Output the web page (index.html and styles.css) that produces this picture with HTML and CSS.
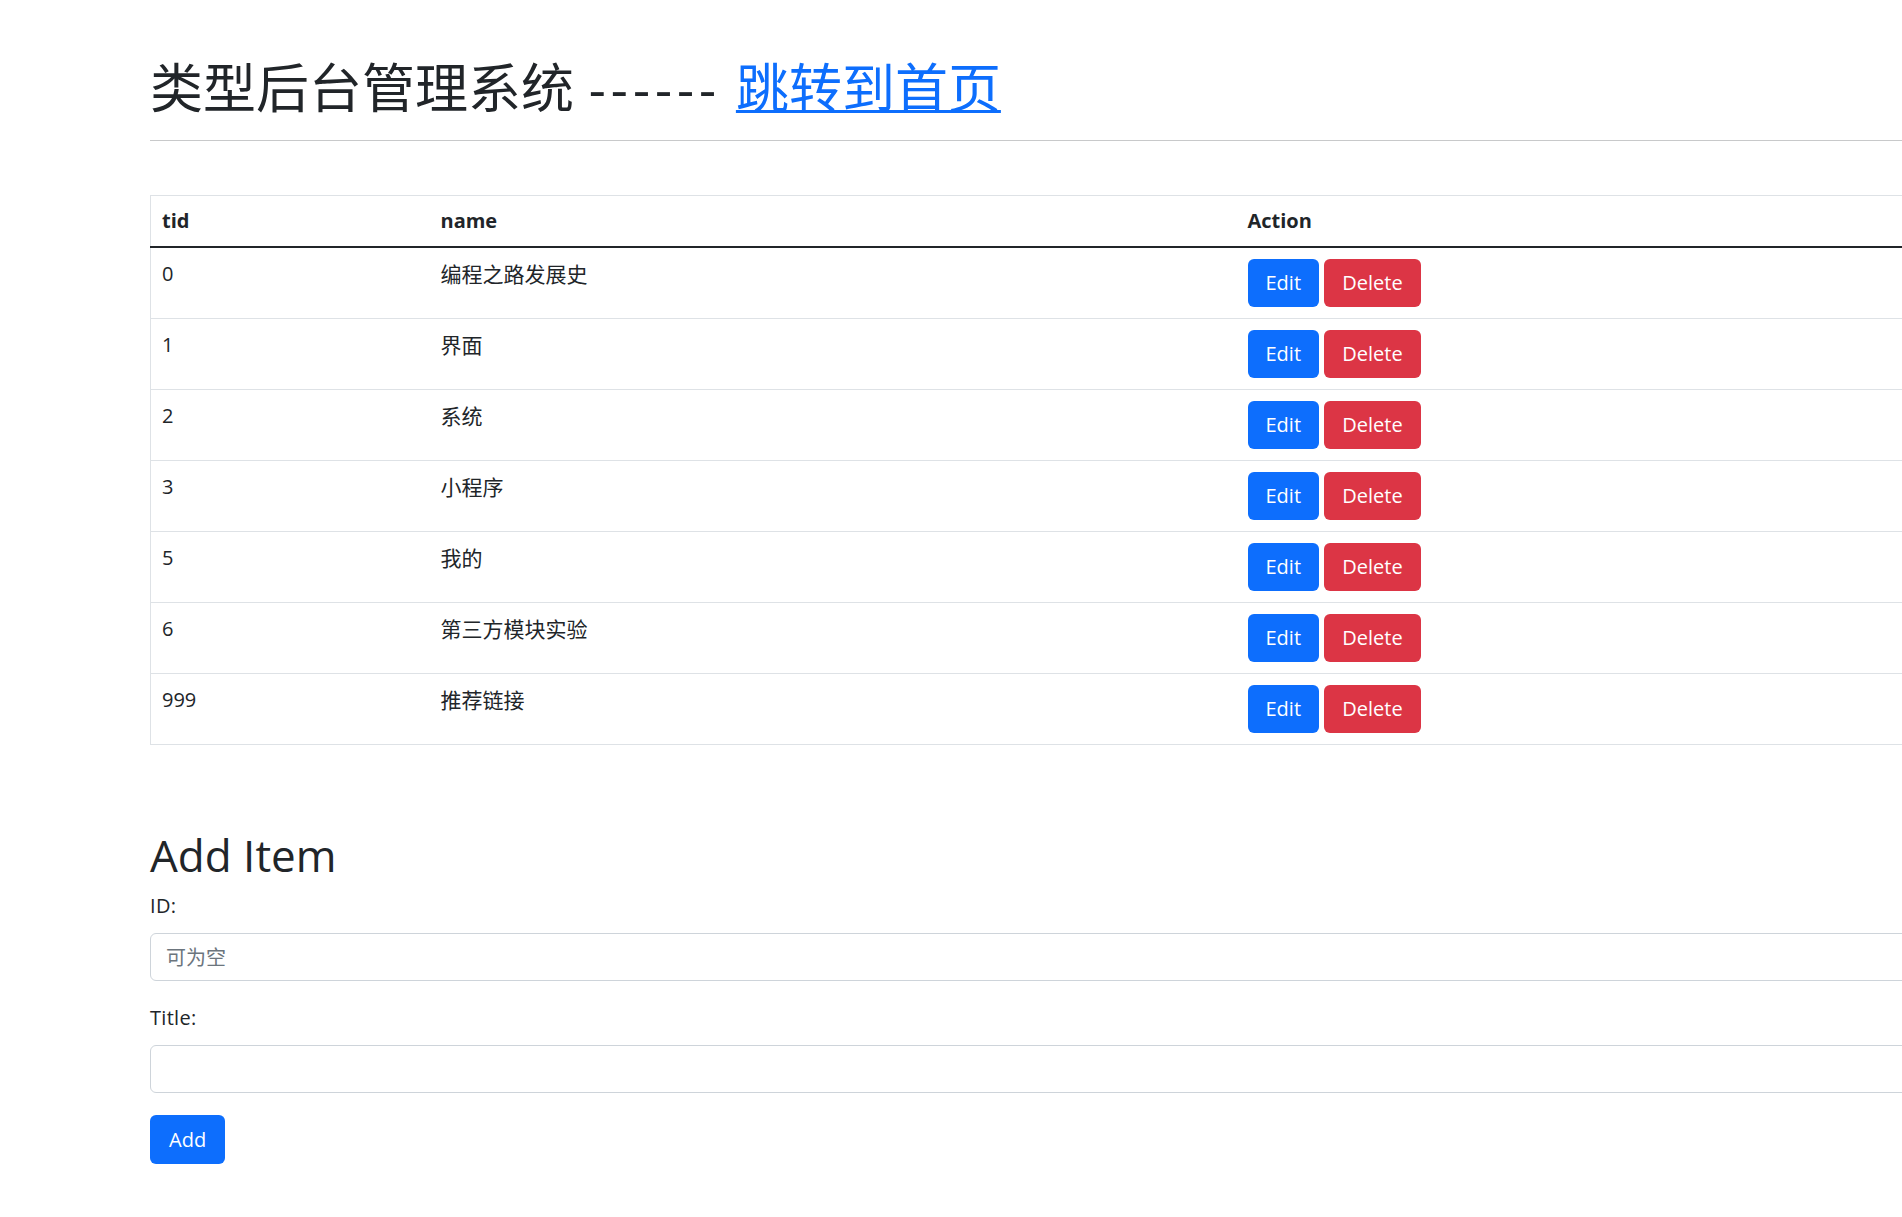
FILE: index.html
```html
<!DOCTYPE html>
<html lang="zh-CN">

<head>
    <meta charset="UTF-8">
    <meta name="viewport" content="width=device-width, initial-scale=1.0">
    <title>类型后台管理系统</title>
    <link rel="stylesheet" href="styles.css">
</head>

<body>
    <div class="container">
        <h1 class="page-title">类型后台管理系统 <span class="dashes">------</span> <a href="#">跳转到首页</a></h1>
        <hr>

        <table class="type-table">
            <colgroup>
                <col class="col-tid">
                <col class="col-name">
                <col>
            </colgroup>
            <thead>
                <tr>
                    <th>tid</th>
                    <th>name</th>
                    <th>Action</th>
                </tr>
            </thead>
            <tbody>
                <tr>
                    <td>0</td>
                    <td class="name">编程之路发展史</td>
                    <td><button class="btn btn-primary">Edit</button> <button class="btn btn-danger">Delete</button></td>
                </tr>
                <tr>
                    <td>1</td>
                    <td class="name">界面</td>
                    <td><button class="btn btn-primary">Edit</button> <button class="btn btn-danger">Delete</button></td>
                </tr>
                <tr>
                    <td>2</td>
                    <td class="name">系统</td>
                    <td><button class="btn btn-primary">Edit</button> <button class="btn btn-danger">Delete</button></td>
                </tr>
                <tr>
                    <td>3</td>
                    <td class="name">小程序</td>
                    <td><button class="btn btn-primary">Edit</button> <button class="btn btn-danger">Delete</button></td>
                </tr>
                <tr>
                    <td>5</td>
                    <td class="name">我的</td>
                    <td><button class="btn btn-primary">Edit</button> <button class="btn btn-danger">Delete</button></td>
                </tr>
                <tr>
                    <td>6</td>
                    <td class="name">第三方模块实验</td>
                    <td><button class="btn btn-primary">Edit</button> <button class="btn btn-danger">Delete</button></td>
                </tr>
                <tr>
                    <td>999</td>
                    <td class="name">推荐链接</td>
                    <td><button class="btn btn-primary">Edit</button> <button class="btn btn-danger">Delete</button></td>
                </tr>
            </tbody>
        </table>

        <h2 class="section-title">Add Item</h2>
        <form id="addForm">
            <label for="tid">ID:</label>
            <input type="text" id="tid" placeholder="可为空">
            <label for="title">Title:</label>
            <input type="text" id="title">
            <button type="submit" class="btn btn-primary btn-add">Add</button>
        </form>
    </div>
</body>

</html>
```

FILE: styles.css
```css
* {
    box-sizing: border-box;
    margin: 0;
    padding: 0;
}

html,
body {
    overflow: hidden;
}

body {
    background-color: #fff;
    color: #212529;
    font-family: 'Open Sans', 'Noto Sans CJK SC', sans-serif;
    font-size: 20px;
    line-height: 30px;
}

.container {
    width: 1800px;
    margin-left: 150px;
}

.page-title {
    margin-top: 57px;
    font-size: 53px;
    font-weight: 400;
    line-height: 62px;
    word-spacing: 1px;
}

.page-title .dashes {
    letter-spacing: 5px;
}

.page-title a {
    color: #0d6efd;
    text-decoration: underline;
    text-decoration-thickness: 3px;
}

hr {
    margin-top: 21px;
    border: none;
    border-top: 1px solid #c8c9ca;
}

.type-table {
    width: 100%;
    margin-top: 54px;
    border-collapse: collapse;
    table-layout: fixed;
    border: 1px solid #dee2e6;
}

.col-tid {
    width: 279px;
}

.col-name {
    width: 807px;
}

th,
td {
    text-align: left;
    vertical-align: top;
    padding: 11px 11px;
}

th {
    padding: 10px 11px;
    font-weight: 700;
    border-bottom: 2px solid #212529;
}

td {
    border-bottom: 1px solid #dee2e6;
}

td.name {
    font-size: 21px;
}

.btn {
    height: 48px;
    padding: 0 18px;
    border: none;
    border-radius: 6px;
    color: #fff;
    font-family: inherit;
    font-size: 20px;
    line-height: 48px;
    cursor: pointer;
}

.btn-primary {
    background-color: #0d6efd;
}

.btn-danger {
    background-color: #dc3545;
}

.section-title {
    margin-top: 84px;
    font-size: 44px;
    font-weight: 400;
    line-height: 53px;
}

form {
    display: flex;
    flex-direction: column;
    align-items: flex-start;
}

label {
    margin-top: 9px;
    margin-bottom: 12px;
    letter-spacing: 0.3px;
}

input {
    width: 100%;
    height: 48px;
    padding: 0 15px;
    border: 1px solid #ced4da;
    border-radius: 6px;
    font-family: inherit;
    font-size: 20px;
    color: #212529;
}

input::placeholder {
    color: #6c757d;
}

input + label {
    margin-top: 22px;
}

.btn-add {
    height: 49px;
    margin-top: 22px;
    padding: 0 19px;
}
```
